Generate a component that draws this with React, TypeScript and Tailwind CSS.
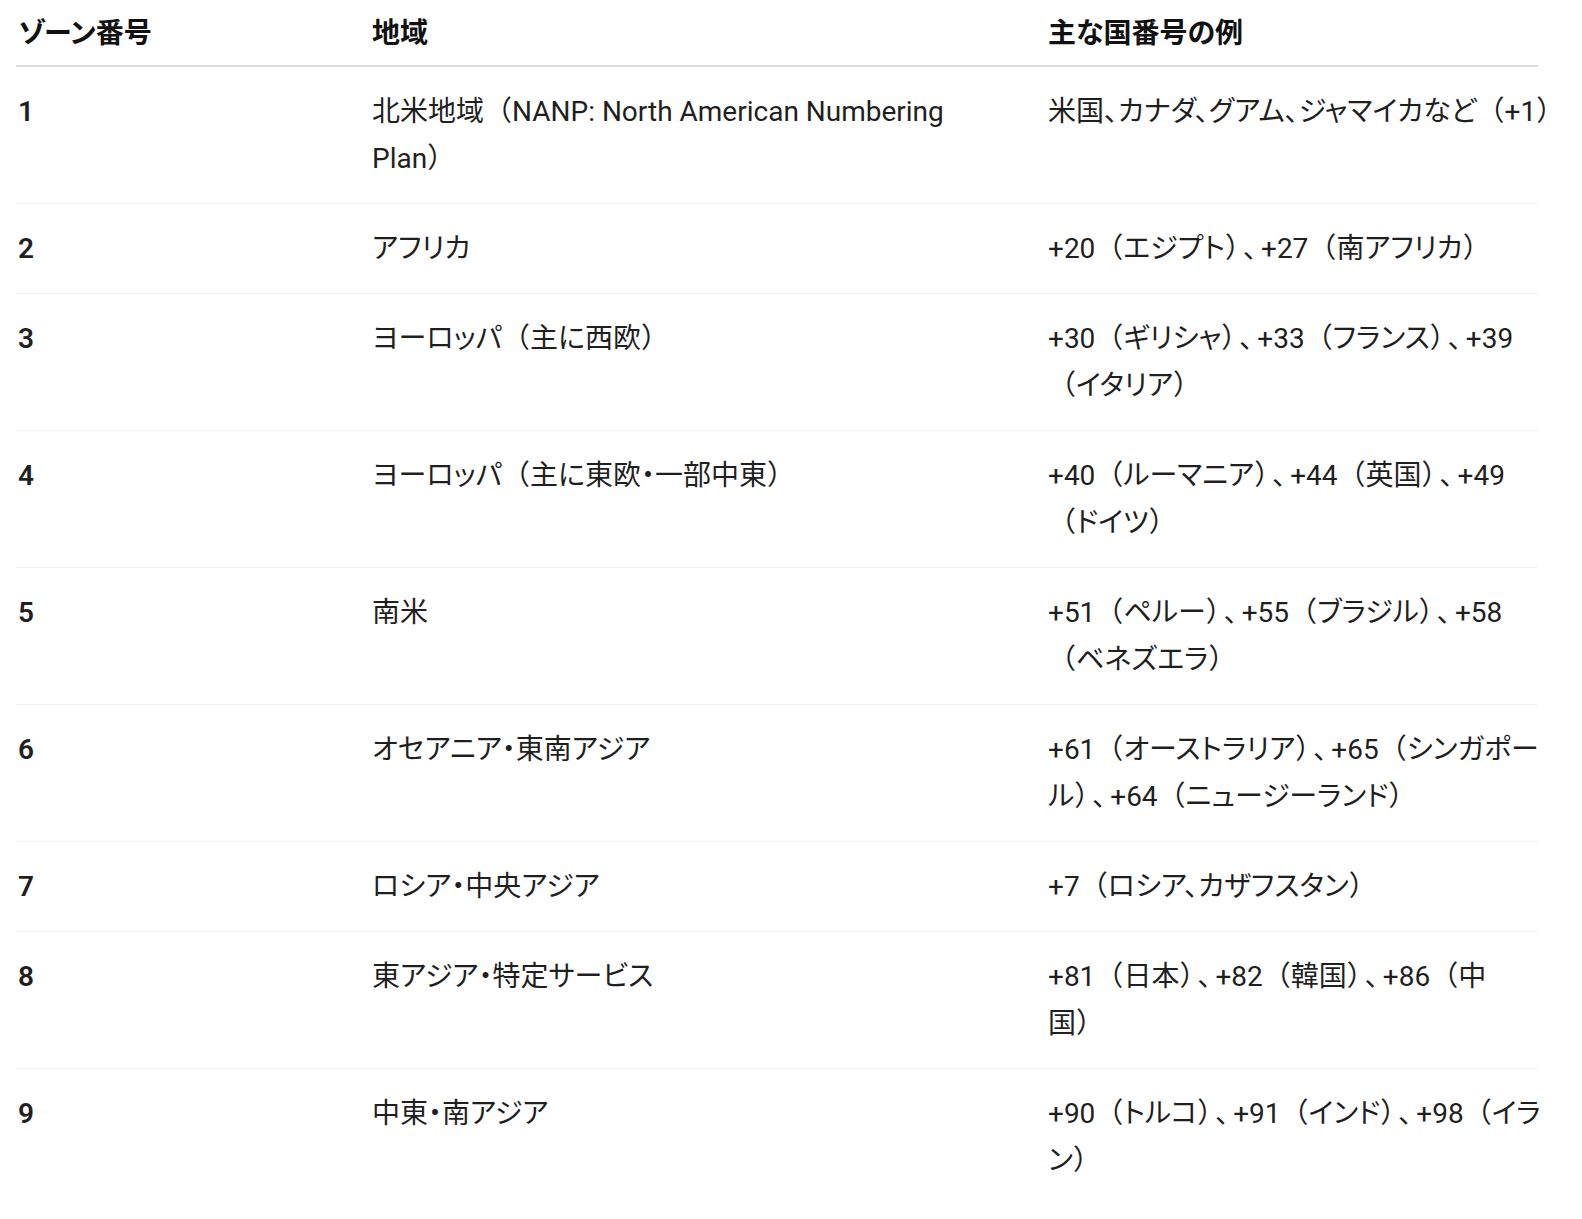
import React from "react";

type Row = { zone: string; region: string[]; examples: string[] };

// line breaks follow the reference's wrapping
const rows: Row[] = [
  {
    zone: "1",
    region: ["北米地域（NANP: North American Numbering", "Plan）"],
    examples: ["米国、カナダ、グアム、ジャマイカなど（+1）"],
  },
  { zone: "2", region: ["アフリカ"], examples: ["+20（エジプト）、+27（南アフリカ）"] },
  {
    zone: "3",
    region: ["ヨーロッパ（主に西欧）"],
    examples: ["+30（ギリシャ）、+33（フランス）、+39", "（イタリア）"],
  },
  {
    zone: "4",
    region: ["ヨーロッパ（主に東欧・一部中東）"],
    examples: ["+40（ルーマニア）、+44（英国）、+49", "（ドイツ）"],
  },
  {
    zone: "5",
    region: ["南米"],
    examples: ["+51（ペルー）、+55（ブラジル）、+58", "（ベネズエラ）"],
  },
  {
    zone: "6",
    region: ["オセアニア・東南アジア"],
    examples: ["+61（オーストラリア）、+65（シンガポー", "ル）、+64（ニュージーランド）"],
  },
  { zone: "7", region: ["ロシア・中央アジア"], examples: ["+7（ロシア、カザフスタン）"] },
  {
    zone: "8",
    region: ["東アジア・特定サービス"],
    examples: ["+81（日本）、+82（韓国）、+86（中", "国）"],
  },
  {
    zone: "9",
    region: ["中東・南アジア"],
    examples: ["+90（トルコ）、+91（インド）、+98（イラ", "ン）"],
  },
];

// brackets keep their full width, kana get proportional widths,
// a comma right after a bracket gets a little air on both sides
const Text: React.FC<{ s: string }> = ({ s }) => (
  <>
    {s.split(/(）、|[（）])/).map((part, i) => {
      if (part === "（" || part === "）")
        return (
          <span key={i} className="[font-feature-settings:normal]">
            {part}
          </span>
        );
      if (part === "）、")
        return (
          <React.Fragment key={i}>
            <span className="[font-feature-settings:normal]">）</span>
            <span className="mx-1">、</span>
          </React.Fragment>
        );
      return <span key={i}>{part}</span>;
    })}
  </>
);

const Lines: React.FC<{ lines: string[] }> = ({ lines }) => (
  <>
    {lines.map((l, i) => (
      <div key={i} className="whitespace-nowrap">
        <Text s={l} />
      </div>
    ))}
  </>
);

export default function App() {
  return (
    <div className="h-[1219px] w-full overflow-hidden bg-white font-['Roboto','Noto_Sans_CJK_JP',sans-serif] text-[28px] leading-[47px] text-[#1f1f1f] [font-feature-settings:'palt']">
      <table className="ml-4 w-[1522px] table-fixed border-collapse text-left">
        <colgroup>
          <col className="w-[356px]" />
          <col className="w-[676px]" />
          <col />
        </colgroup>
        <thead>
          <tr className="border-b-2 border-[#dcdcdc]">
            <th className="pl-[2px] pt-[10px] pb-[8px] font-bold text-[#111]">ゾーン番号</th>
            <th className="pt-[10px] pb-[8px] font-bold text-[#111]">地域</th>
            <th className="pt-[10px] pb-[8px] font-bold text-[#111]">主な国番号の例</th>
          </tr>
        </thead>
        <tbody>
          {rows.map((r, i) => (
            <tr key={r.zone} className={i < rows.length - 1 ? "border-b border-[#f0f0f0]" : ""}>
              <td className="pl-[2px] py-[21px] align-top font-semibold">{r.zone}</td>
              <td className="py-[21px] align-top">
                <Lines lines={r.region} />
              </td>
              <td className="py-[21px] align-top">
                <Lines lines={r.examples} />
              </td>
            </tr>
          ))}
        </tbody>
      </table>
    </div>
  );
}
